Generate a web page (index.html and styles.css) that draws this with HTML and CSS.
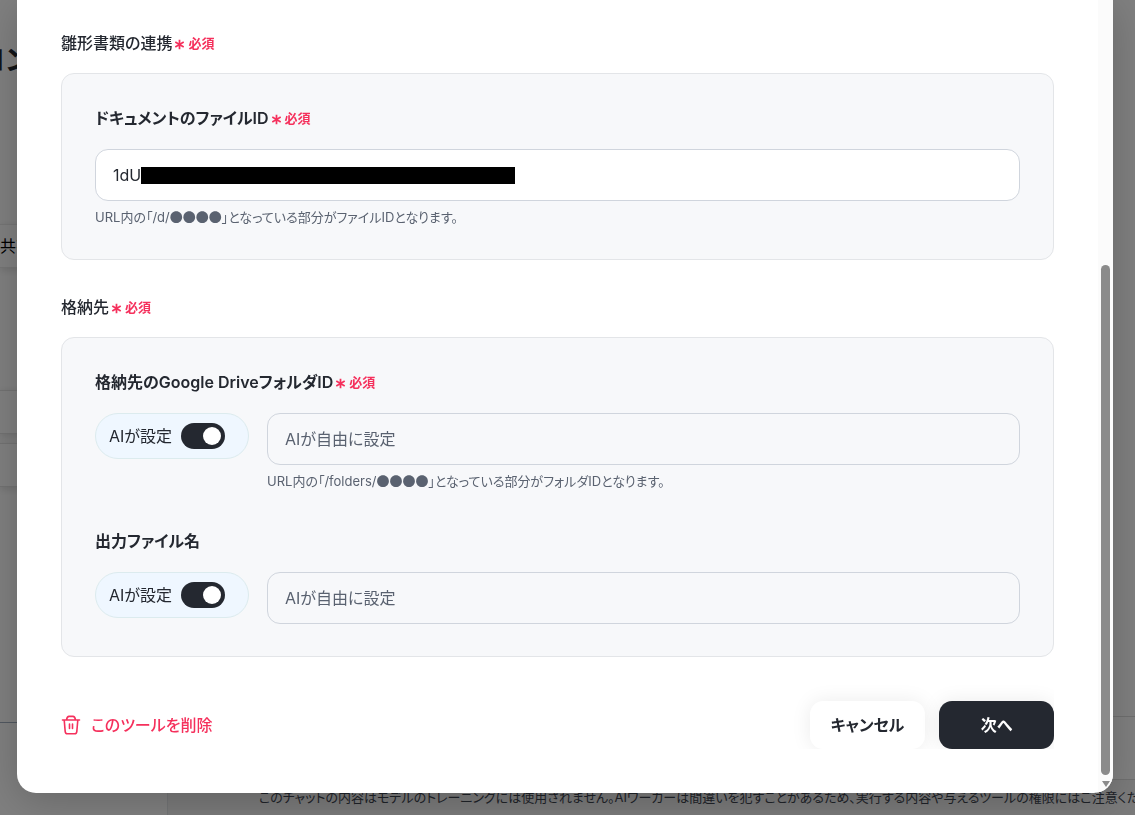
FILE: index.html
```html
<!DOCTYPE html>
<html lang="ja">
<head>
<meta charset="utf-8">
<title>ツール設定</title>
<link rel="stylesheet" href="styles.css">
</head>
<body>
<svg class="defs" aria-hidden="true">
  <symbol id="asterisk" viewBox="0 0 12 12">
    <path d="M6 .8v10.400M1.400 3.400l9.200 5.200M10.600 3.400l-9.200 5.200" fill="none" stroke="currentColor" stroke-width="1.9"/>
  </symbol>
</svg>
<div class="page">
  <aside class="side">
    <div class="side-title"><span>コン</span></div>
    <div class="side-tab">共有</div>
    <div class="side-row"></div>
    <div class="side-row"></div>
    <div class="side-line"></div>
  </aside>
  <main class="chat">
    <div class="composer"></div>
    <p class="notice">このチャットの内容はモデルのトレーニングには使用されません。AIワーカーは間違いを犯すことがあるため、実行する内容や与えるツールの権限にはご注意ください。</p>
  </main>
</div>
<div class="backdrop">
  <div class="modal" role="dialog" aria-label="ツール設定">
    <form class="content">
      <section class="section">
        <h2 class="heading">雛形書類の連携<span class="required"><svg class="star"><use href="#asterisk"/></svg>必須</span></h2>
        <div class="card">
          <div class="field">
            <label class="label" for="doc">ドキュメントのファイルID<span class="required"><svg class="star"><use href="#asterisk"/></svg>必須</span></label>
            <div class="control">
              <div class="masked"><input class="input filled" id="doc" type="text" value="1dU"><span class="mask"></span></div>
              <p class="help">URL内の「/d/<span class="dots">●●●●</span>」となっている部分がファイルIDとなります。</p>
            </div>
          </div>
        </div>
      </section>
      <section class="section">
        <h2 class="heading">格納先<span class="required"><svg class="star"><use href="#asterisk"/></svg>必須</span></h2>
        <div class="card">
          <div class="field">
            <label class="label" for="folder">格納先のGoogle DriveフォルダID<span class="required"><svg class="star"><use href="#asterisk"/></svg>必須</span></label>
            <div class="row">
              <label class="pill">AIが設定<input class="toggle" type="checkbox" role="switch" checked></label>
              <div class="control">
                <input class="input" id="folder" type="text" placeholder="AIが自由に設定">
                <p class="help">URL内の「/folders/<span class="dots">●●●●</span>」となっている部分がフォルダIDとなります。</p>
              </div>
            </div>
          </div>
          <div class="field">
            <label class="label" for="file">出力ファイル名</label>
            <div class="row">
              <label class="pill">AIが設定<input class="toggle" type="checkbox" role="switch" checked></label>
              <div class="control">
                <input class="input" id="file" type="text" placeholder="AIが自由に設定">
              </div>
            </div>
          </div>
        </div>
      </section>
      <footer class="actions">
        <button class="delete" type="button">
          <svg class="trash" viewBox="0 0 20 20" fill="none" stroke="currentColor" stroke-width="1.6" stroke-linecap="round" stroke-linejoin="round" aria-hidden="true">
            <path d="M1.500 5h17M5.500 4.800C6 2.200 6.600 1.400 8 1.400h4c1.400 0 2 .8 2.500 3.400M3.200 5l1 11.600c.2 1.500.9 2.200 2.300 2.200h7c1.400 0 2.100-.7 2.300-2.200l1-11.600M8.500 9v4.500M11.500 9v4.500"/>
          </svg>
          このツールを削除
        </button>
        <button class="button" type="button">キャンセル</button>
        <button class="button primary" type="submit">次へ</button>
      </footer>
    </form>
    <div class="scrollbar" aria-hidden="true">
      <div class="thumb"></div>
      <div class="arrow"></div>
    </div>
  </div>
</div>
</body>
</html>
```
FILE: styles.css
```css
* { box-sizing: border-box; }
body {
  margin: 0;
  height: 100vh;
  overflow: hidden;
  color: #242830;
  font: 400 16px/24px Inter, "Noto Sans CJK JP", sans-serif;
  font-feature-settings: "palt";
}
h2, p { margin: 0; }
button, input { font: inherit; color: inherit; font-feature-settings: inherit; }
.defs { position: absolute; width: 0; height: 0; }

.page { display: flex; height: 100vh; background: #fff; }
.side {
  flex: 0 0 168px;
  display: flex;
  flex-direction: column;
  overflow: hidden;
  border-right: 1px solid #e4e7ea;
}
.side-title { height: 224px; padding-top: 40px; font-size: 28px; line-height: 40px; font-weight: 700; }
.side-title span { margin-left: -22px; }
.side-tab { height: 44px; margin-bottom: 122px; border: solid #eaeaea; border-width: 1px 0; line-height: 42px; color: #000; box-shadow: 0 2px 8px #0002; }
.side-row { height: 44px; margin-bottom: 9px; border: solid #e4e4e4; border-width: 1px 0; box-shadow: 0 2px 8px #0002; }
.side-line { margin-top: 226px; border-top: 1px solid #a3b0c0; }
.chat { flex: 1; min-width: 0; display: flex; flex-direction: column; justify-content: flex-end; }
.composer { height: 64px; border: solid #ddd; border-width: 1px 0; }
.notice { height: 35px; padding-left: 91px; background: #f4f4f4; color: #3f4651; font-size: 13px; line-height: 34px; white-space: nowrap; }

.backdrop { position: fixed; inset: 0; padding: 0 22px 22px 17px; background: #00000080; display: flex; }
.modal {
  flex: 1;
  display: flex;
  overflow: hidden;
  background: #fff;
  border-radius: 0 0 19px 19px;
  box-shadow: 0 8px 40px #0003;
}
.content { flex: 1; min-width: 0; padding: 31px 44px 44px; }
.section { margin-bottom: 35px; }
.heading { display: flex; margin-bottom: 18px; font-size: 16px; font-weight: 500; }
.required { display: flex; align-items: center; gap: 3px; margin-left: 2px; color: #f5305c; font-size: 13px; font-weight: 600; }
.star { width: 11px; height: 11px; margin-top: 3px; }
.card { display: grid; gap: 38px; padding: 32px 33px; background: #f7f8fa; border: 1px solid #e3e5e8; border-radius: 13px; }
.field { display: grid; gap: 19px; }
.label { display: flex; font-weight: 600; }
.row { display: grid; grid-template-columns: 154px 1fr; gap: 18px; align-items: start; }
.pill {
  display: flex;
  align-items: center;
  gap: 9px;
  height: 46px;
  padding-left: 13px;
  background: #eff7ff;
  border: 1px solid #dcebee;
  border-radius: 23px;
}
.toggle {
  appearance: none;
  width: 44px;
  height: 26px;
  margin: 0;
  padding: 4px;
  border-radius: 13px;
  background: #242830;
}
.toggle::before { content: ""; display: block; width: 18px; height: 18px; margin-left: auto; border-radius: 50%; background: #fff; }
.control { display: grid; gap: 6px; }
.input { display: block; width: 100%; height: 52px; padding: 0 17px; background: transparent; border: 1px solid #d0d5dd; border-radius: 13px; }
.input.filled { background: #fff; }
.input::placeholder { color: #5a6270; opacity: 1; }
.masked { position: relative; }
.mask { position: absolute; left: 46px; top: 18px; width: 374px; height: 17px; background: #000; }
.help { height: 20px; color: #5a6270; font-size: 13px; line-height: 20px; }
.dots { font-family: "Noto Sans CJK JP", sans-serif; }

.actions { display: flex; gap: 14px; overflow: hidden; margin-top: -35px; padding-top: 44px; }
.delete { display: flex; align-items: center; gap: 10px; margin-right: auto; padding: 0; border: 0; background: none; color: #f5305c; font-weight: 500; }
.trash { width: 20px; height: 20px; }
.button { width: 115px; height: 48px; padding: 0; border: 0; border-radius: 13px; background: #fff; font-weight: 700; box-shadow: 0 0 20px #00000014; }
.button.primary { background: #242830; color: #fff; }

.scrollbar { flex: 0 0 15px; display: flex; flex-direction: column; align-items: center; justify-content: flex-end; gap: 6px; padding-bottom: 6px; background: #fbfbfb; }
.thumb { width: 9px; height: 510px; border-radius: 5px; background: #8b8b8b; }
.arrow { border: solid transparent; border-width: 6px 4px 0; border-top-color: #8b8b8b; }
```
